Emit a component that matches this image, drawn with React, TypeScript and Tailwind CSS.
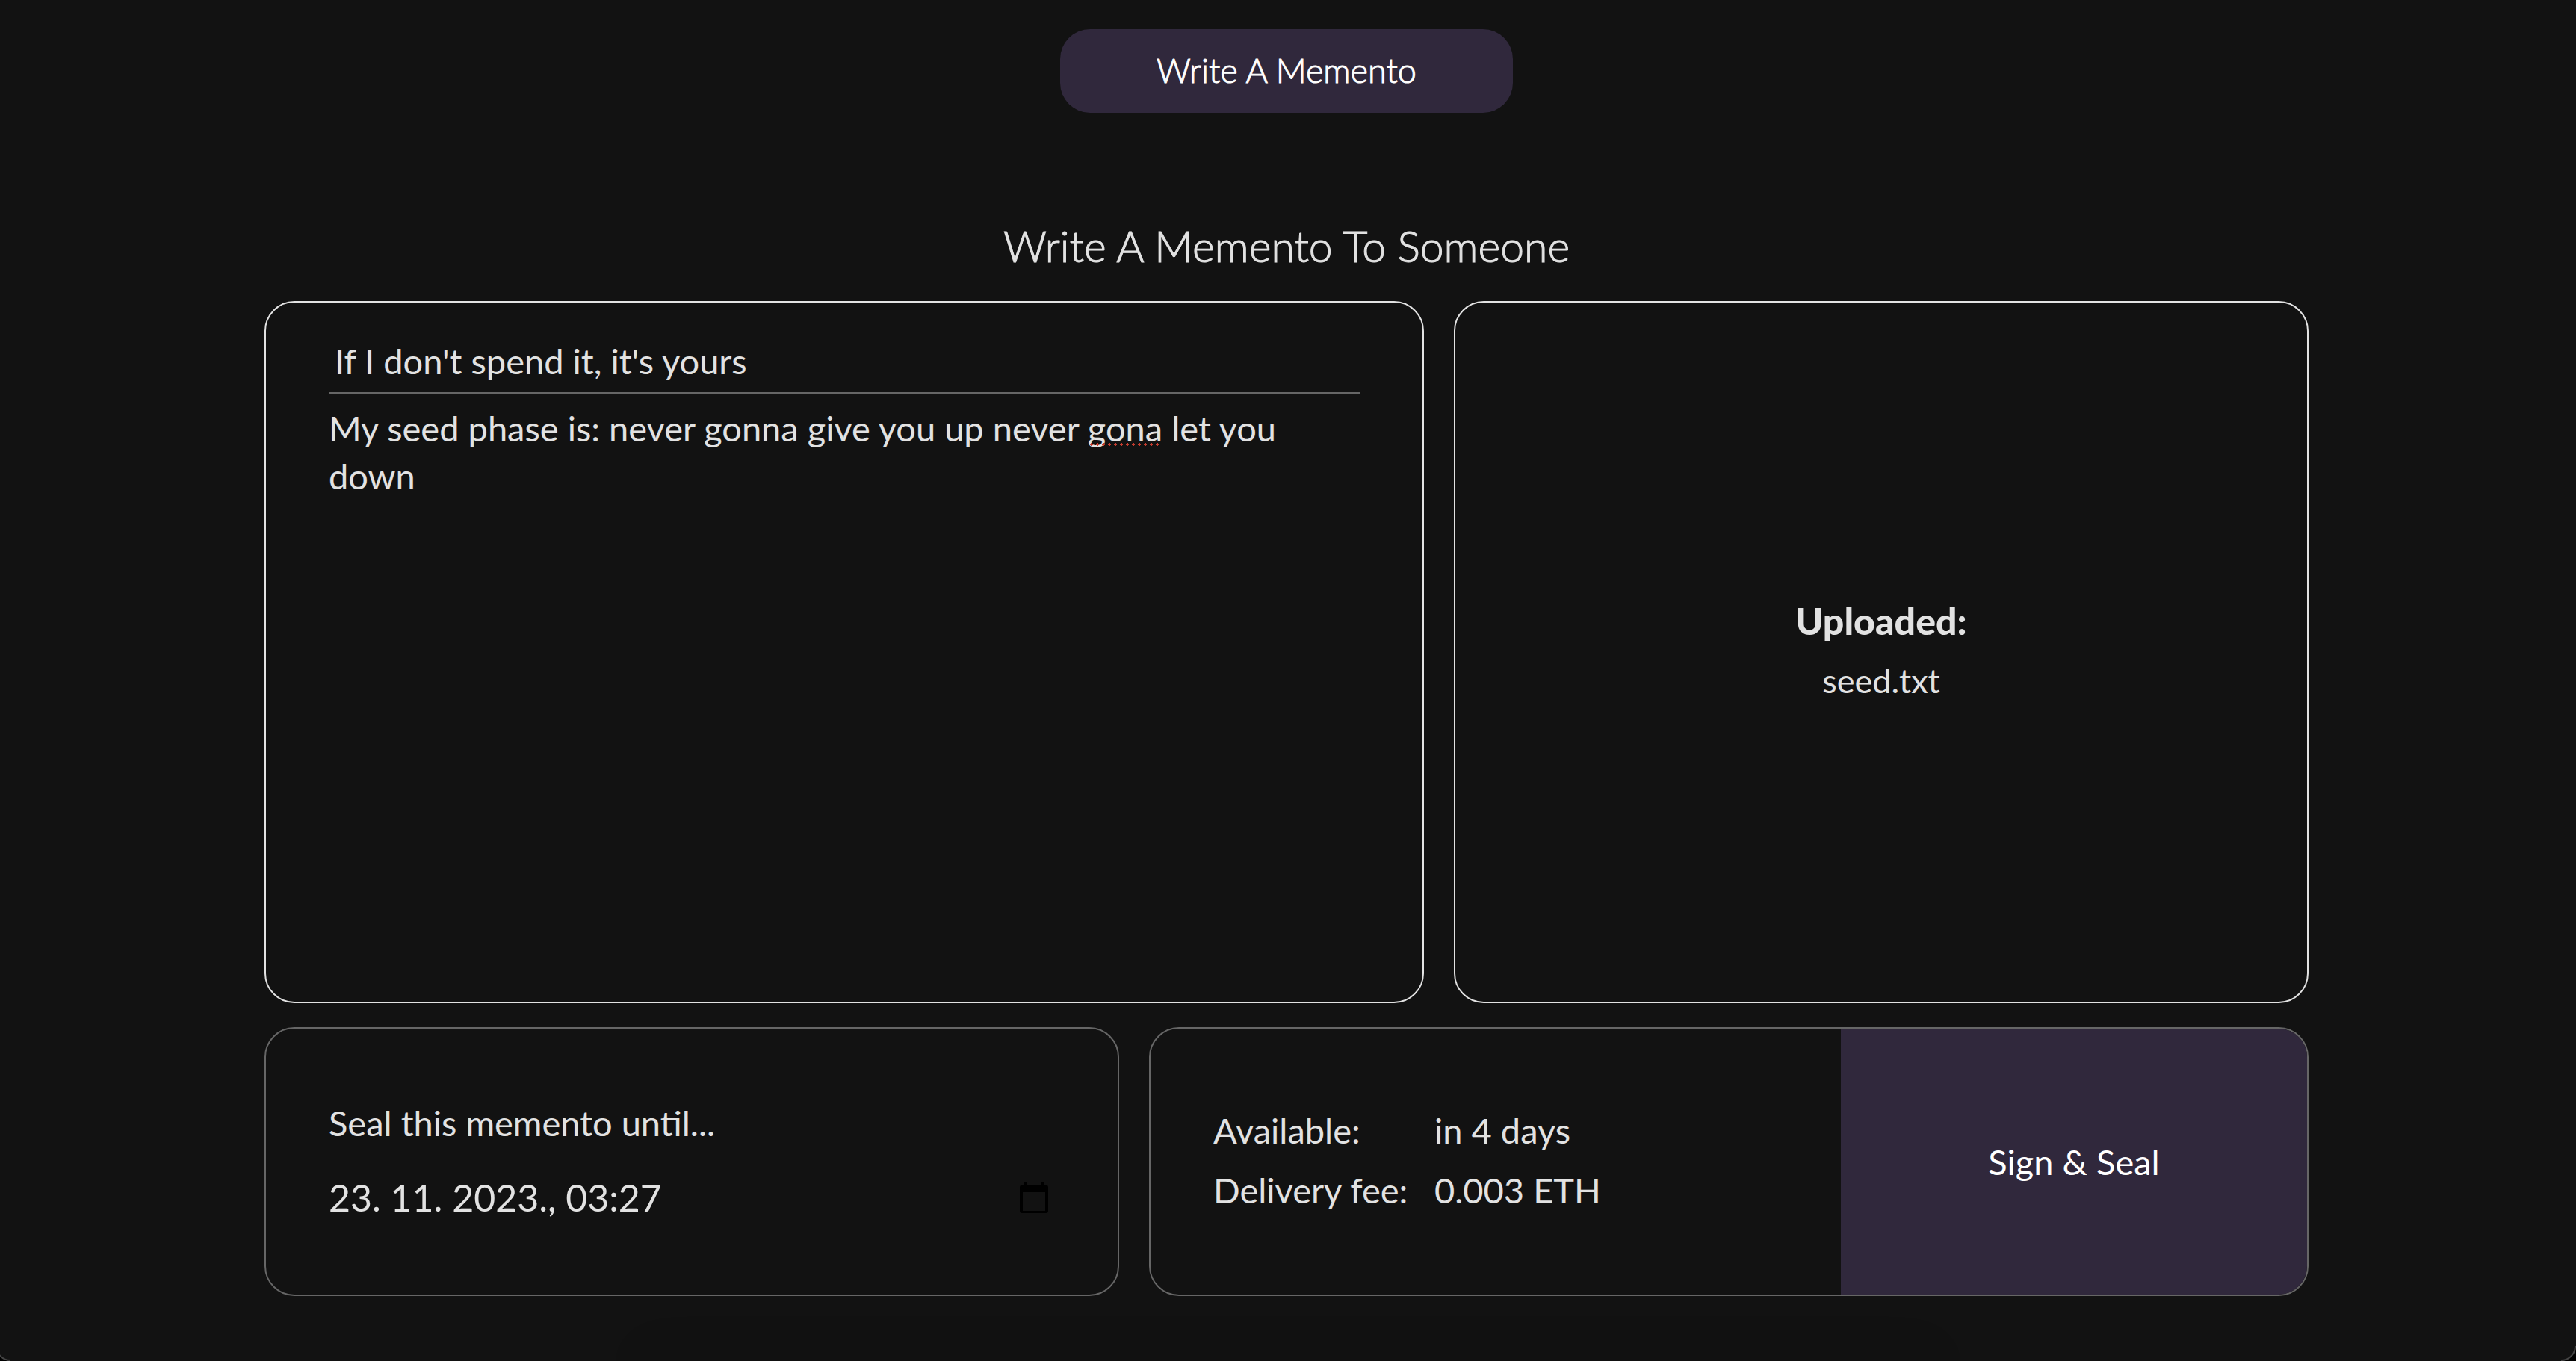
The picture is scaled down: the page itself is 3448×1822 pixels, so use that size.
import { useState } from "react";

function CalendarIcon() {
  return (
    <svg viewBox="0 0 48 48" className="size-12" aria-hidden="true">
      <path
        fill="#000"
        fillRule="evenodd"
        d="M11 4h4v3.500h18V4h4v3.500h3a3 3 0 0 1 3 3V42a3 3 0 0 1-3 3H8a3 3 0 0 1-3-3V10.500a3 3 0 0 1 3-3h3ZM9 17v25h30V17Z"
      />
    </svg>
  );
}

export default function App() {
  const [subject, setSubject] = useState("If I don't spend it, it's yours");
  const [message, setMessage] = useState(
    "My seed phase is: never gonna give you up never gona let you down",
  );
  const [date, setDate] = useState("23. 11. 2023., 03:27");

  return (
    <div className="relative min-h-screen overflow-hidden bg-[#121212] pr-1 font-['Lato','Noto_Sans',sans-serif] text-[47px] text-[#e2e2e2]">
      <header className="flex justify-center pt-[39px]">
        <button
          type="button"
          className="h-28 w-[606px] rounded-[40px] bg-[#30283c] text-[45px] font-light text-white [-webkit-text-stroke:1px]"
        >
          Write A Memento
        </button>
      </header>

      <main className="mt-[138px] px-[354px]">
        <h1 className="mb-[34px] text-center text-[57px] leading-[80px] font-light [-webkit-text-stroke:1px]">
          Write A Memento To Someone
        </h1>

        <form className="flex flex-col gap-8" onSubmit={(e) => e.preventDefault()}>
          <div className="grid min-h-[940px] grid-cols-[1552fr_1144fr] gap-10">
            <section className="flex flex-col rounded-[40px] border-2 border-[#e2e2e2] px-[84px] py-9">
              <input
                type="text"
                aria-label="Subject"
                spellCheck={false}
                value={subject}
                onChange={(e) => setSubject(e.target.value)}
                className="h-[86px] w-full border-b-2 border-[#666] bg-transparent pl-2 outline-none"
              />
              <div className="relative mt-[14px] flex flex-1">
                <textarea
                  aria-label="Message"
                  spellCheck={false}
                  value={message}
                  onChange={(e) => setMessage(e.target.value)}
                  className="w-full flex-1 resize-none bg-transparent leading-[64px] outline-none"
                />
                <span
                  aria-hidden="true"
                  className="pointer-events-none absolute top-[52px] left-[1017px] h-1 w-24 bg-[radial-gradient(circle,#c43c2e_2px,transparent_2px)] bg-[length:8px_4px]"
                />
              </div>
            </section>

            <section className="flex flex-col items-center justify-center rounded-[40px] border-2 border-[#e2e2e2] pb-1 leading-[80px]">
              <strong className="text-[50px] font-black">Uploaded:</strong>
              <span className="text-[45px]">seed.txt</span>
            </section>
          </div>

          <div className="grid min-h-[360px] grid-cols-[1144fr_1552fr] gap-10">
            <section className="flex flex-col justify-center gap-6 rounded-[40px] border-2 border-[#666] px-[84px]">
              <label htmlFor="seal-date" className="leading-[72px]">
                Seal this memento until...
              </label>
              <div className="flex h-20 items-center pr-1">
                <input
                  id="seal-date"
                  type="text"
                  value={date}
                  onChange={(e) => setDate(e.target.value)}
                  className="h-20 min-w-0 flex-1 bg-transparent text-[50px] outline-none"
                />
                <button type="button" aria-label="Open calendar">
                  <CalendarIcon />
                </button>
              </div>
            </section>

            <section className="grid grid-cols-[924fr_624fr] overflow-hidden rounded-[40px] border-2 border-[#666]">
              <dl className="grid grid-cols-[260px_1fr] content-center gap-x-9 pb-1 pl-[84px] leading-[80px] whitespace-nowrap">
                <dt>Available:</dt>
                <dd>in 4 days</dd>
                <dt>Delivery fee:</dt>
                <dd>0.003 ETH</dd>
              </dl>
              <button type="submit" className="bg-[#30283c] text-white">
                Sign &amp; Seal
              </button>
            </section>
          </div>
        </form>
      </main>

      <div className="pointer-events-none absolute -bottom-2 left-1/4 h-2 w-1/2 shadow-[0_0_60px_rgba(0,0,0,0.3)]" />
      <div className="pointer-events-none absolute bottom-0 -left-1.5 size-5 rounded-bl-[20px] border-b-2 border-l-2 border-[#444] shadow-[-4px_4px_0_4px_#000]" />
      <div className="pointer-events-none absolute right-0 bottom-0 size-5 rounded-br-[20px] border-r-2 border-b-2 border-[#444] shadow-[4px_4px_0_4px_#000]" />
    </div>
  );
}
